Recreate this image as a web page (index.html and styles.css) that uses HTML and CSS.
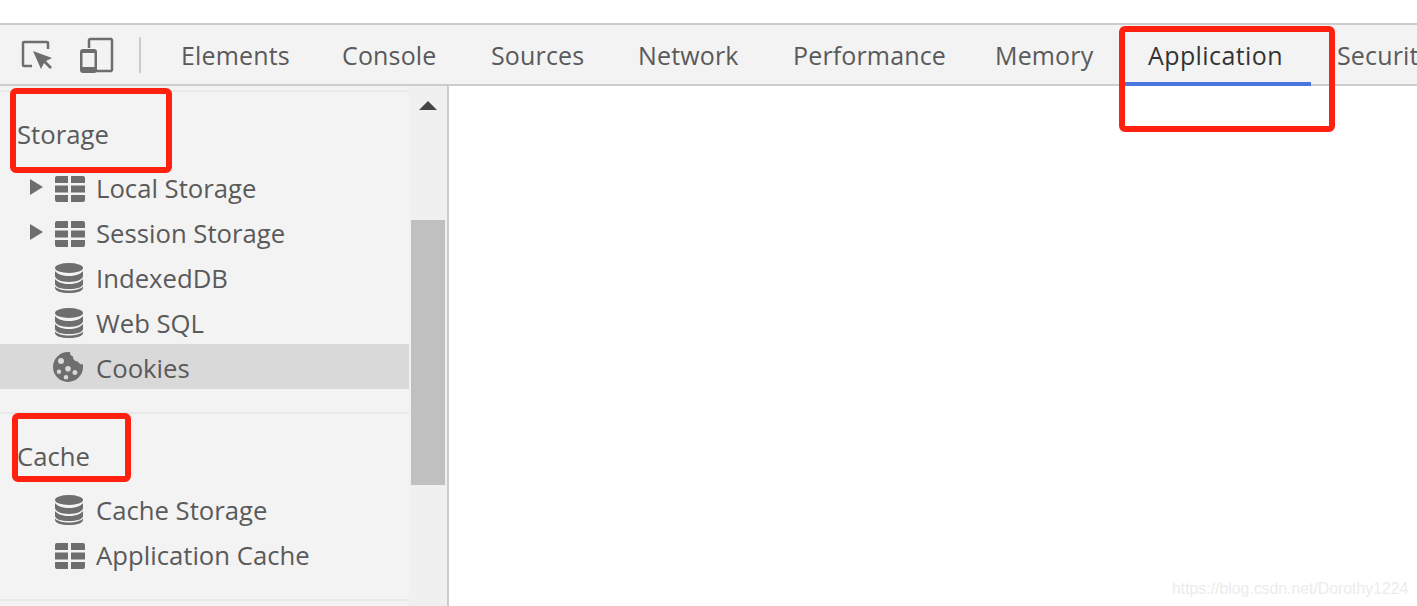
FILE: index.html
```html
<!DOCTYPE html>
<html>
<head>
<meta charset="utf-8">
<title>DevTools Application</title>
<link rel="stylesheet" href="styles.css">
</head>
<body>
<svg class="defs" width="0" height="0">
	<symbol id="i-table" viewBox="0 0 30 26">
		<path d="M2 0h11v7H0V2a2 2 0 0 1 2-2zM16 0h12a2 2 0 0 1 2 2v5H16zM0 9.500h13v7H0zM16 9.500h14v7H16zM0 19h13v7H2a2 2 0 0 1-2-2zM16 19h14v5a2 2 0 0 1-2 2H16z"/>
	</symbol>
	<symbol id="i-db" viewBox="0 0 28 30">
		<ellipse cx="14" cy="5" rx="14" ry="5"/>
		<path d="M0 8c2 3 8 5 14 5s12-2 14-5v5c0 3-6 6-14 6S0 16 0 13zM0 16c2 3 8 5 14 5s12-2 14-5v5c0 3-6 5-14 5S0 24 0 21z"/>
		<path d="M0 23.500c2 2.500 8 4 14 4s12-1.500 14-4V25c0 3-6 5-14 5S0 28 0 25z"/>
	</symbol>
	<symbol id="i-cookie" viewBox="0 0 30 30">
		<path fill-rule="evenodd" d="M15 0c1 0 2 .1 2 .1-.3 2 .8 4 3 4.400-.2 3 2.200 5.200 5 4.900.6 2 2.600 3.200 4.900 2.800.1 1 .1 1.800.1 2.800a15 15 0 1 1-15-15zM8 6a3 3 0 1 0 0 6 3 3 0 0 0 0-6zM15 14a2.800 2.800 0 1 0 0 5.600 2.800 2.800 0 0 0 0-5.600zM6 17.500a2.200 2.200 0 1 0 0 4.400 2.200 2.200 0 0 0 0-4.400zM22 18a2.500 2.500 0 1 0 0 5 2.500 2.500 0 0 0 0-5zM13 23a2.300 2.300 0 1 0 0 4.600 2.300 2.300 0 0 0 0-4.600z"/>
	</symbol>
</svg>

<div class="toolbar">
	<div class="tools">
		<svg class="tool" width="32" height="30" viewBox="0 0 32 30">
			<path class="line" d="M11 26H3a1 1 0 0 1-1-1V3a1 1 0 0 1 1-1h23a1 1 0 0 1 1 1v6"/>
			<path d="M12 11l19 7-6 3 6 6-2 2-6-6-3 6z"/>
		</svg>
		<svg class="tool" width="34" height="36" viewBox="0 0 34 36">
			<path class="line" d="M9 11V3a2 2 0 0 1 1-1h21a2 2 0 0 1 1 1v30a2 2 0 0 1-1 1H15"/>
			<path fill-rule="evenodd" d="M3 12h11a3 3 0 0 1 3 3v18a3 3 0 0 1-3 3H3a3 3 0 0 1-3-3V15a3 3 0 0 1 3-3zM2.500 16v14h12V16z"/>
		</svg>
		<span class="tool-sep"></span>
	</div>
	<div class="tabs">
		<a class="tab">Elements</a>
		<a class="tab">Console</a>
		<a class="tab">Sources</a>
		<a class="tab">Network</a>
		<a class="tab">Performance</a>
		<a class="tab">Memory</a>
		<a class="tab active">Application</a>
		<a class="tab">Security</a>
	</div>
</div>

<div class="main">
	<div class="sidebar">
		<div class="list">
			<div class="section first">
				<h3>Storage</h3>
				<div class="row"><i class="arrow"></i><svg class="ic ic-table"><use href="#i-table"/></svg><span>Local Storage</span></div>
				<div class="row"><i class="arrow"></i><svg class="ic ic-table"><use href="#i-table"/></svg><span>Session Storage</span></div>
				<div class="row"><svg class="ic ic-db"><use href="#i-db"/></svg><span>IndexedDB</span></div>
				<div class="row"><svg class="ic ic-db"><use href="#i-db"/></svg><span>Web SQL</span></div>
				<div class="row selected"><svg class="ic ic-cookie"><use href="#i-cookie"/></svg><span>Cookies</span></div>
			</div>
			<div class="section">
				<h3>Cache</h3>
				<div class="row"><svg class="ic ic-db"><use href="#i-db"/></svg><span>Cache Storage</span></div>
				<div class="row"><svg class="ic ic-table"><use href="#i-table"/></svg><span>Application Cache</span></div>
			</div>
			<div class="section"></div>
		</div>
		<div class="scrollbar">
			<i class="up"></i>
			<div class="thumb"></div>
		</div>
	</div>
	<div class="content"></div>
</div>

<!-- red marks drawn over the screenshot -->
<div class="mark mark-storage"></div>
<div class="mark mark-cache"></div>
<div class="mark mark-app"></div>
<div class="watermark">https://blog.csdn.net/Dorothy1224</div>
</body>
</html>
```

FILE: styles.css
```css
*{ margin:0; padding:0; box-sizing:border-box;}
html,body{ height:100%; overflow:hidden;}
body{ background:#fff; padding-top:23px; color:#5a5a5a; font-family:"Open Sans","Noto Sans","Liberation Sans",sans-serif; font-size:25px; position:relative;}
.defs{ position:absolute;}

.toolbar{ height:63px; display:flex; background:#f3f3f3; border-top:2px solid #ccc; border-bottom:2px solid #ccc;}
.tools{ width:158px; flex:none; display:flex; align-items:center; padding-left:21px;}
.tool{ fill:#6e6e6e; flex:none;}
.tool:nth-child(2){ margin-left:27px;}
.tool .line{ fill:none; stroke:#6e6e6e; stroke-width:2.500;}
.tool-sep{ width:2px; height:36px; background:#ccc; margin-left:25px;}
.tabs{ display:grid; grid-template-columns:161px 149px 147px 155px 202px 153px 189px auto; flex:none;}
.tab{ display:block; height:61px; line-height:60px; padding-left:23px; letter-spacing:.15px; white-space:nowrap;}
.tab.active{ color:#333; letter-spacing:.4px; margin-right:3px; border-bottom:4px solid #4876de;}

.main{ display:flex; height:520px;}
.sidebar{ width:449px; flex:none; display:flex; background:#f3f3f3; border-right:2px solid #ccc; overflow:hidden;}
.list{ width:409px; flex:none; padding-top:4px; font-size:25.7px;}
.section{ border-top:2px solid #e8e8e8; padding-bottom:23px;}
.section h3{ height:72px; padding:26px 0 0 17px; font-weight:normal; font-size:25.7px; line-height:34px;}
.row{ height:45px; display:flex; align-items:center; padding-left:55px; position:relative; white-space:nowrap;}
.row span{ position:absolute; left:96px; top:8px; line-height:34px;}
.row.selected{ background:#d9d9d9;}
.arrow{ position:absolute; left:30px; top:15px; border-left:13px solid #6e6e6e; border-top:8px solid transparent; border-bottom:8px solid transparent;}
.ic{ fill:#6e6e6e; flex:none;}
.ic-table{ width:30px; height:26px; margin-top:5px;}
.ic-db{ width:28px; height:30px; margin-top:2px;}
.ic-cookie{ width:30px; height:30px; margin-left:-2px;}

.scrollbar{ width:38px; flex:none; background:#f0f0f0; padding:0 2px;}
.up{ display:block; width:0; margin:15px 0 0 8px; border-left:9px solid transparent; border-right:9px solid transparent; border-bottom:9px solid #444;}
.thumb{ height:265px; margin-top:110px; background:#c0c0c0;}
.content{ flex:1; background:#fff;}

.mark{ position:absolute; border:6px solid #ff2010; border-radius:6px;}
.mark-storage{ left:10px; top:88px; width:162px; height:85px;}
.mark-cache{ left:12px; top:413px; width:119px; height:69px;}
.mark-app{ left:1119px; top:26px; width:216px; height:106px;}
.watermark{ position:absolute; left:1172px; top:580px; font:15.8px/18px "Liberation Sans",sans-serif; color:#ececec;}
```
